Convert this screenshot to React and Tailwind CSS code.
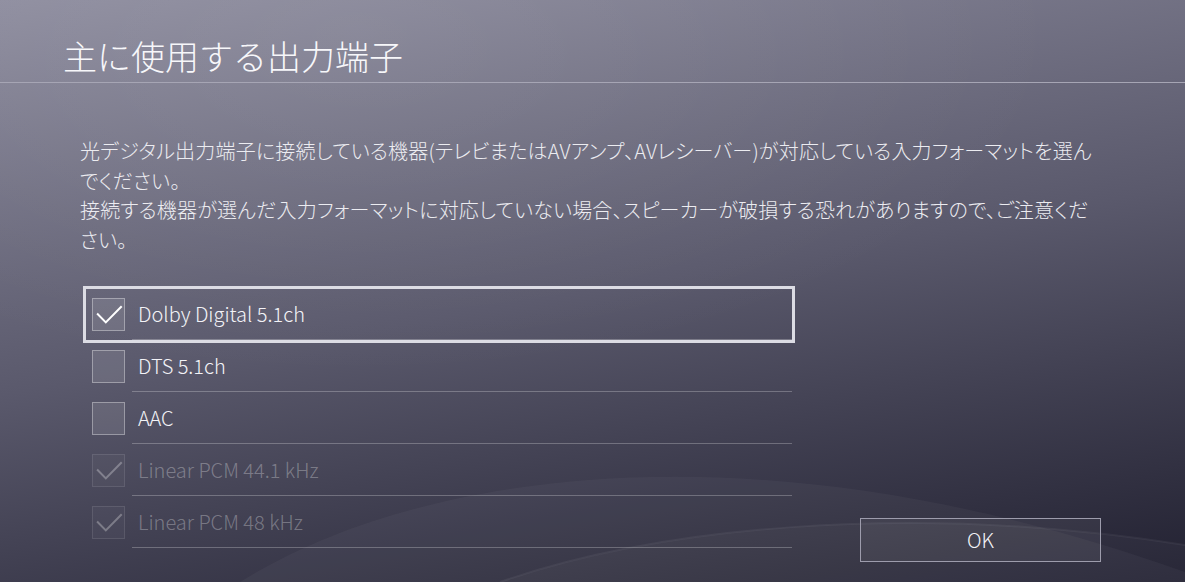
import React from 'react';

const lines = [
  '光デジタル出力端子に接続している機器(テレビまたはAVアンプ、AVレシーバー)が対応している入力フォーマットを選ん',
  'でください。',
  '接続する機器が選んだ入力フォーマットに対応していない場合、スピーカーが破損する恐れがありますので、ご注意くだ',
  'さい。',
];

const options = [
  { label: 'Dolby Digital 5.1ch', checked: true, disabled: false, focused: true },
  { label: 'DTS 5.1ch', checked: false, disabled: false },
  { label: 'AAC', checked: false, disabled: false },
  { label: 'Linear PCM 44.1 kHz', checked: true, disabled: true },
  { label: 'Linear PCM 48 kHz', checked: true, disabled: true },
];

const font = { fontFamily: "'Noto Sans CJK JP', 'Noto Sans', sans-serif" };

const Check = () => (
  <svg width="33" height="33" viewBox="0 0 33 33" className="block">
    <path d="M4.8 15.2 L12.8 23.4 L28 8" fill="none" stroke="#ffffff" strokeWidth="2" strokeLinecap="square" />
  </svg>
);

const Row = ({ opt }) => (
  <div className="relative flex h-[52px] items-stretch pl-[9px]">
    <div className={`flex items-center ${opt.disabled ? 'opacity-30' : ''}`}>
      <div className="h-[33px] w-[33px] border border-white/35 bg-white/10">
        {opt.checked && <Check />}
      </div>
    </div>
    <div className="ml-[7px] mr-[3px] flex flex-1 items-center border-b border-white/25 pl-[6px]">
      <span className={`text-[20px] font-light ${opt.disabled ? 'text-white/30' : 'text-[#f3f3f7]'}`}>{opt.label}</span>
    </div>
    {opt.focused && (
      <div className="pointer-events-none absolute -top-[2px] -bottom-[3px] left-0 right-0 border-[3px] border-[#dcdce4]" />
    )}
  </div>
);

export default function App() {
  return (
    <div
      className="relative h-[582px] w-[1185px] overflow-hidden bg-linear-170 from-[#8d8c9e] via-[#5a596c] to-[#222131]"
      style={font}
    >
      {/* background waves */}
      <svg className="absolute inset-0" width="1185" height="582" viewBox="0 0 1185 582">
        <defs>
          <radialGradient id="glow" cx="0.3" cy="0.05" r="0.6">
            <stop offset="0" stopColor="#ffffff" stopOpacity="0.08" />
            <stop offset="1" stopColor="#ffffff" stopOpacity="0" />
          </radialGradient>
        </defs>
        <rect width="1185" height="582" fill="url(#glow)" />
        <path d="M240 582 C 420 470, 760 420, 1185 572 L1185 582 Z" fill="#ffffff" fillOpacity="0.035" />
        <path d="M500 582 C 650 530, 900 500, 1185 545 L1185 582 Z" fill="#ffffff" fillOpacity="0.03" />
        <path d="M500 582 C 650 530, 900 500, 1185 545" fill="none" stroke="#ffffff" strokeOpacity="0.05" strokeWidth="2" />
      </svg>

      <div className="relative flex h-full flex-col">
        <div className="h-[83px] border-b border-[#a6a5b4] pl-[63px] pt-[39px]">
          <h1 className="text-[34px] font-light leading-[34px] text-[#f7f7fa]">主に使用する出力端子</h1>
        </div>

        <div className="ml-[80px] mt-[53px] text-[20px] font-light leading-[29.5px] tracking-[0.2px] text-[#ececf1] [font-feature-settings:'palt']">
          {lines.map((l, i) => (
            <div key={i} className="whitespace-nowrap">{l}</div>
          ))}
        </div>

        <div className="mt-[34px] flex items-start">
          <div className="ml-[83px] w-[712px]">
            {options.map((o) => (
              <Row key={o.label} opt={o} />
            ))}
          </div>
          <button className="ml-[65px] mt-[230px] flex h-[44px] w-[241px] items-center justify-center border border-[#9d9cac] bg-white/5 text-[20px] font-light text-[#f3f3f7]">
            OK
          </button>
        </div>
      </div>
    </div>
  );
}
